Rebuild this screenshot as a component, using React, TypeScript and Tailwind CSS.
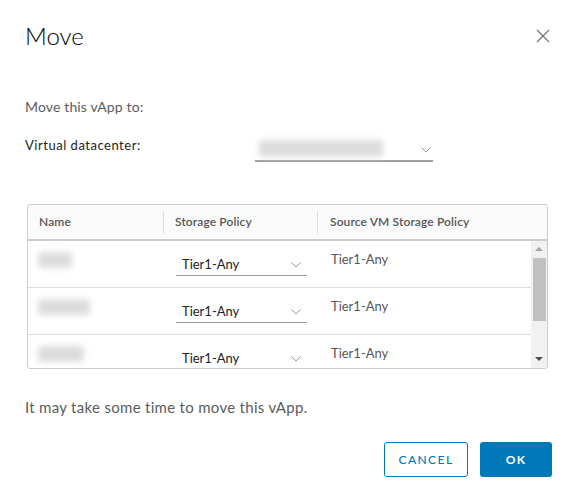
import React from "react";

function Chevron() {
  return (
    <svg width="10" height="6" viewBox="0 0 10 6" fill="none">
      <path d="M0.5 0.5 L5 5 L9.5 0.5" stroke="#9a9a9a" strokeWidth="1" />
    </svg>
  );
}

function Blur({ w, h = 16 }: { w: number; h?: number }) {
  return <div className="bg-[#dcdcdc] blur-[3px] rounded-sm" style={{ width: w, height: h }} />;
}

function Row({ nameW, last }: { nameW: number; last?: boolean }) {
  return (
    <div className={"flex h-[47px] shrink-0 " + (last ? "" : "border-b border-[#dddddd]")}>
      <div className="w-[136px] pl-[10px] pt-[11px]">
        <Blur w={nameW} />
      </div>
      <div className="w-[154px] pl-[12px] pt-[9px]">
        <div className="w-[131px] h-[26px] border-b border-[#9a9a9a] flex items-center justify-between pl-[6px] pr-[6px] pt-[4px]">
          <span className="text-[13px] text-[#222]">Tier1-Any</span>
          <Chevron />
        </div>
      </div>
      <div className="flex-1 pl-[13px] pt-[5px]">
        <span className="text-[13px] leading-[20px] text-[#565656]">Tier1-Any</span>
      </div>
    </div>
  );
}

export default function App() {
  return (
    <div className="w-[576px] h-[502px] bg-white font-['Lato',sans-serif] text-[#313131] flex flex-col px-[25px] overflow-hidden">
      <div className="flex items-start justify-between pt-[20px]">
        <h1 className="text-[24px] font-light leading-[32px] text-black">Move</h1>
        <button className="mt-[9px] mr-[1px] w-[14px] h-[14px]">
          <svg width="14" height="14" viewBox="0 0 14 14" fill="none">
            <path d="M1 1 L13 13 M13 1 L1 13" stroke="#777777" strokeWidth="1.3" />
          </svg>
        </button>
      </div>

      <p className="mt-[45px] text-[14px] leading-[20px] text-[#5c5c5c] tracking-[0.01em]">Move this vApp to:</p>

      <div className="mt-[18px] flex items-start">
        <label className="w-[230px] text-[13px] leading-[20px] text-[#222] tracking-[0.04em]">Virtual datacenter:</label>
        <div className="mt-[1px] w-[178px] h-[26px] border-b-2 border-[#a0a0a0] flex items-center justify-between pl-[4px] pr-[2px]">
          <Blur w={124} h={17} />
          <div className="mt-[4px]">
            <Chevron />
          </div>
        </div>
      </div>

      <div className="mt-[42px] ml-[2px] w-[521px] h-[165px] border border-[#cccccc] rounded-[3px] flex flex-col overflow-hidden">
        <div className="h-[36px] shrink-0 bg-[#fafafa] border-b-2 border-[#cccccc] flex items-center text-[12px] font-semibold text-[#565656] tracking-[0.01em]">
          <div className="w-[135px] pl-[11px]">Name</div>
          <div className="w-px h-[23px] bg-[#dddddd]" />
          <div className="w-[153px] pl-[11px]">Storage Policy</div>
          <div className="w-px h-[23px] bg-[#dddddd]" />
          <div className="flex-1 pl-[12px]">Source VM Storage Policy</div>
        </div>
        <div className="flex h-[127px]">
          <div className="flex-1 flex flex-col overflow-hidden">
            <Row nameW={34} />
            <Row nameW={52} />
            <Row nameW={46} last />
          </div>
          <div className="w-[16px] bg-[#f1f1f1] flex flex-col items-center">
            <div className="mt-[6px] w-0 h-0 border-l-[4px] border-r-[4px] border-b-[4px] border-l-transparent border-r-transparent border-b-[#a3a3a3]" />
            <div className="mt-[7px] w-[13px] h-[63px] bg-[#c1c1c1] ml-[1px]" />
            <div className="mt-auto mb-[7px] w-0 h-0 border-l-[4px] border-r-[4px] border-t-[4px] border-l-transparent border-r-transparent border-t-[#505050]" />
          </div>
        </div>
      </div>

      <p className="mt-[28px] text-[15px] leading-[20px] text-[#5c5c5c] tracking-[0.02em]">It may take some time to move this vApp.</p>

      <div className="mt-[25px] mr-[-1px] flex justify-end gap-[12px]">
        <button className="w-[84px] h-[35px] border border-[#0079b8] rounded-[3px] text-[#0079b8] text-[12px] tracking-[0.12em] font-medium">
          CANCEL
        </button>
        <button className="w-[72px] h-[35px] bg-[#0079b8] rounded-[3px] text-white text-[12px] tracking-[0.1em] font-bold">
          OK
        </button>
      </div>
    </div>
  );
}
